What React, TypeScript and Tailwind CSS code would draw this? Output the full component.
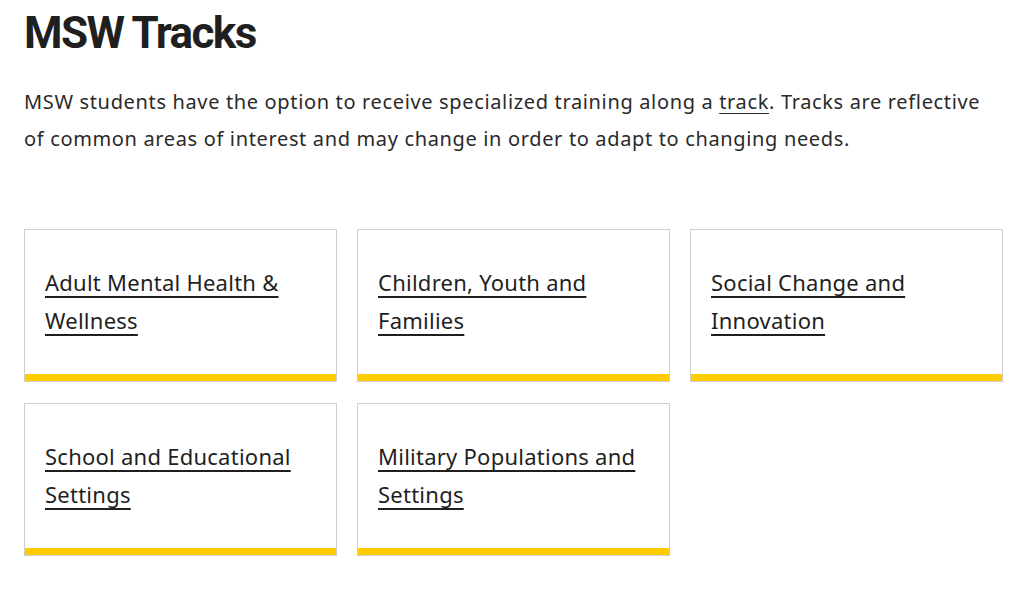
import React from 'react';

const tracks = [
  'Adult Mental Health & Wellness',
  'Children, Youth and Families',
  'Social Change and Innovation',
  'School and Educational Settings',
  'Military Populations and Settings',
];

function TrackCard({ title }: { title: string }) {
  return (
    <a href="#" className="flex h-[153px] w-[313px] flex-col border border-[#cfcfcf] bg-white">
      <div className="flex-1 pl-5 pr-7 pt-[33px]">
        <span className="text-[22px] leading-[38px] tracking-[0.25px] text-[#1f1f1f] underline decoration-2 underline-offset-[5px]">
          {title}
        </span>
      </div>
      <div className="h-[7px] bg-[#ffcc00]" />
    </a>
  );
}

export default function App() {
  return (
    <div className="min-h-screen bg-white px-6 pt-[7px] font-['Noto_Sans',sans-serif] text-[#222]">
      <h1 className="font-['Roboto',sans-serif] text-[44px] font-bold leading-[52px] tracking-[-1.6px] text-[#1f1f1f]">
        MSW Tracks
      </h1>
      <p className="mt-[24px] w-[966px] text-[20px] leading-[37px] tracking-[0.65px] text-[#2a2a2a]">
        MSW students have the option to receive specialized training along a{' '}
        <a href="#" className="underline decoration-1 underline-offset-[4px]">
          track
        </a>
        . Tracks are reflective of common areas of interest and may change in order to adapt to changing needs.
      </p>
      <div className="mt-[72px] grid w-[979px] grid-cols-[313px_313px_313px] gap-x-5 gap-y-[21px]">
        {tracks.map((t) => (
          <TrackCard key={t} title={t} />
        ))}
      </div>
    </div>
  );
}
